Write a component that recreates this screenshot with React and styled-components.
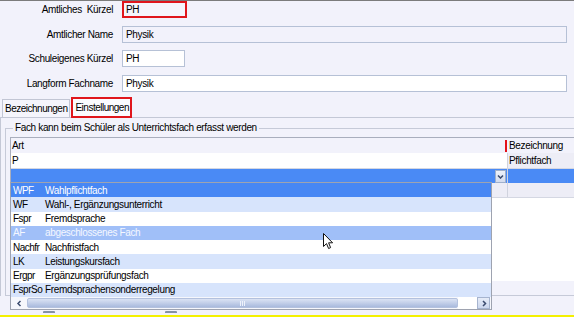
import React from "react";
import styled, { createGlobalStyle, css } from "styled-components";

const Global = createGlobalStyle`
  html, body { margin: 0; padding: 0; background: #f2f2fb; }
  body { font-family: "Liberation Sans", Arial, sans-serif; }
  * { box-sizing: border-box; }
`;

const Root = styled.div`
  position: relative;
  width: 574px;
  height: 317px;
  overflow: hidden;
  background: #f2f2fb;
  border-top: 1px solid #7c7c7c;
  border-bottom: 2px solid #f4f000;
  font-size: 10px;
  letter-spacing: -0.35px;
  color: #000;
  display: flex;
  flex-direction: column;
`;

const Form = styled.div`
  display: grid;
  grid-template-columns: 113px 1fr;
  grid-auto-rows: 17px;
  column-gap: 9px;
  row-gap: 7.7px;
  padding-right: 7px;
  align-items: center;
`;

const Label = styled.div`
  text-align: right;
  white-space: pre;
`;

const Field = styled.div`
  height: 17px;
  width: ${(p) => (p.$wide ? "100%" : "63px")};
  border: 1px solid #b6c1d6;
  background: ${(p) => (p.$readonly ? "#f2f2fb" : "#ffffff")};
  padding: 0 3px;
  display: flex;
  align-items: center;
  ${(p) =>
    p.$marked &&
    css`
      border: 2px solid #e0161c;
      width: 65px;
      padding-left: 2px;
      background: #f5f5fc;
    `}
`;

const TabStrip = styled.div`
  display: flex;
  align-items: flex-end;
  height: 19px;
  margin-top: 6px;
  padding-left: 2px;
  gap: 1px;
`;

const Tab = styled.div`
  height: 18px;
  padding: 0 2px 0 2px;
  display: flex;
  align-items: center;
  letter-spacing: -0.5px;
  border: 1px solid #c2c6d4;
  border-bottom: none;
  background: #f5f5fc;
  ${(p) =>
    p.$marked &&
    css`
      height: 21px;
      margin-bottom: -1px;
      border: 2px solid #e0161c;
      background: #fbfbff;
      padding: 0 1px 0 2px;
      position: relative;
      z-index: 1;
    `}
`;

const TabPanel = styled.div`
  width: 660px;
  border-top: 1px solid #c4c8d6;
  border-left: 1px solid #c4c8d6;
`;

const GroupBox = styled.fieldset`
  margin: 4px 0 0 4px;
  padding: 3px 0 14px 4px;
  border: 1px solid #c6cad8;
  width: 640px;
  min-width: 0;
`;

const Legend = styled.legend`
  margin-left: 3px;
  padding: 0 2px;
  height: 12px;
  line-height: 12px;
`;

const Table = styled.div`
  position: relative;
  width: 630px;
  height: 144px;
  border-top: 1px solid #a9aebd;
  border-left: 1px solid #a9aebd;
  background: #fff;
`;

const TRow = styled.div`
  display: grid;
  grid-template-columns: 497px 1fr;
  height: ${(p) => p.$h}px;
  background: ${(p) => p.$bg || "transparent"};
  ${(p) => p.$line && css`border-bottom: 1px solid #d4d7e2;`}
`;

const Cell = styled.div`
  display: flex;
  align-items: center;
  justify-content: ${(p) => (p.$end ? "space-between" : "flex-start")};
  padding-left: 1px;
  background: ${(p) => p.$bg || "transparent"};
  ${(p) => p.$sep && css`border-right: 1px solid #d0d3de;`}
`;

const RedMark = styled.span`
  width: 2px;
  height: 12px;
  background: #e4121a;
  margin-right: 1px;
`;

const DropButton = styled.div`
  width: 11px;
  height: 13px;
  margin: 0 1px 0 auto;
  border: 1px solid #9fb0cc;
  background: linear-gradient(#eef2fa, #d4dcee);
  display: flex;
  align-items: center;
  justify-content: center;
`;

const Popup = styled.div`
  position: absolute;
  top: 44px;
  left: -1px;
  width: 482px;
  border: 1px solid #9ea3b0;
  background: #fff;
  z-index: 2;
`;

const List = styled.div`
  display: grid;
  grid-auto-rows: 14.25px;
`;

const variants = {
  selected: { bg: "#4787f4", fg: "#ffffff" },
  alt: { bg: "#d7e4fc", fg: "#000" },
  plain: { bg: "#ffffff", fg: "#000" },
  hover: { bg: "#a0bff8", fg: "#f4f7ff" },
};

const Item = styled.div`
  display: flex;
  align-items: center;
  padding-left: 2px;
  background: ${(p) => variants[p.$v].bg};
  color: ${(p) => variants[p.$v].fg};
`;

const Code = styled.span`
  width: 32px;
  flex: none;
  letter-spacing: -0.5px;
`;

const Scrollbar = styled.div`
  height: 12px;
  display: flex;
  background: #f6f7fc;
  padding-right: 1px;
`;

const ArrowBtn = styled.div`
  width: ${(p) => p.$w}px;
  flex: none;
  display: flex;
  align-items: center;
  justify-content: center;
  ${(p) =>
    p.$boxed &&
    css`
      border: 1px solid #a6b4cf;
      background: linear-gradient(#e6ecf8, #ccd7ee);
    `}
`;

const Thumb = styled.div`
  width: 431px;
  flex: none;
  margin: 1px 0;
  border-radius: 2px;
  background: linear-gradient(#dbe3f4, #a9badd);
  border: 1px solid #b3c1de;
  display: flex;
  align-items: center;
  justify-content: center;
  gap: 1px;
`;

const Grip = styled.span`
  width: 1px;
  height: 5px;
  background: #eef2fb;
`;

const Track = styled.div`
  flex: 1;
  background: #fff;
`;

const Bottom = styled.div`
  flex: 1;
  display: flex;
  align-items: flex-end;
  padding-bottom: 2px;
`;

const Nub = styled.span`
  width: 12px;
  height: 2px;
  margin-left: ${(p) => p.$ml}px;
  background: #8591a3;
  border-radius: 1px 1px 0 0;
`;

const Cursor = styled.svg`
  position: absolute;
  left: 323px;
  top: 232px;
  z-index: 5;
`;

const Chevron = ({ dir }) => {
  const d =
    dir === "down"
      ? "M1 1.5 L3.5 4 L6 1.5"
      : dir === "left"
      ? "M4.5 1 L2 3.5 L4.5 6"
      : "M2 1 L4.5 3.5 L2 6";
  const w = dir === "down" ? 7 : 6;
  const h = dir === "down" ? 5 : 7;
  return (
    <svg width={w} height={h} viewBox={`0 0 ${w} ${h}`}>
      <path d={d} fill="none" stroke="#3b4b6e" strokeWidth="1.5" />
    </svg>
  );
};

const items = [
  ["WPF", "Wahlpflichtfach", "selected"],
  ["WF", "Wahl-, Ergänzungsunterricht", "alt"],
  ["Fspr", "Fremdsprache", "plain"],
  ["AF", "abgeschlossenes Fach", "hover"],
  ["Nachfr", "Nachfristfach", "plain"],
  ["LK", "Leistungskursfach", "alt"],
  ["Ergpr", "Ergänzungsprüfungsfach", "plain"],
  ["FsprSo", "Fremdsprachensonderregelung", "alt"],
];

export default function App() {
  return (
    <>
      <Global />
      <Root>
        <Form>
          <Label>{"Amtliches  Kürzel"}</Label>
          <Field $marked>PH</Field>
          <Label>Amtlicher Name</Label>
          <Field $wide $readonly>Physik</Field>
          <Label>Schuleigenes Kürzel</Label>
          <Field>PH</Field>
          <Label>Langform Fachname</Label>
          <Field $wide>Physik</Field>
        </Form>

        <TabStrip>
          <Tab>Bezeichnungen</Tab>
          <Tab $marked>Einstellungen</Tab>
        </TabStrip>

        <TabPanel>
          <GroupBox>
            <Legend>Fach kann beim Schüler als Unterrichtsfach erfasst werden</Legend>
            <Table>
              <TRow $h={15} $bg="#f2f2fb">
                <Cell $end>
                  Art
                  <RedMark />
                </Cell>
                <Cell>Bezeichnung</Cell>
              </TRow>
              <TRow $h={16} $line>
                <Cell $sep $bg="#fff">P</Cell>
                <Cell $bg="#ededf6">Pflichtfach</Cell>
              </TRow>
              <TRow $h={14} $bg="#4a8af5">
                <Cell $sep>
                  <DropButton>
                    <Chevron dir="down" />
                  </DropButton>
                </Cell>
                <Cell />
              </TRow>
              <TRow $h={15} $line>
                <Cell $sep $bg="#ededf6" />
                <Cell $bg="#ededf6" />
              </TRow>

              <Popup>
                <List>
                  {items.map(([c, n, v]) => (
                    <Item key={c} $v={v}>
                      <Code>{c}</Code>
                      {n}
                    </Item>
                  ))}
                </List>
                <Scrollbar>
                  <ArrowBtn $w={16}>
                    <Chevron dir="left" />
                  </ArrowBtn>
                  <Thumb>
                    <Grip />
                    <Grip />
                    <Grip />
                  </Thumb>
                  <Track />
                  <ArrowBtn $w={13} $boxed>
                    <Chevron dir="right" />
                  </ArrowBtn>
                </Scrollbar>
              </Popup>
            </Table>
          </GroupBox>
        </TabPanel>

        <Bottom>
          <Nub $ml={43} />
          <Nub $ml={110} />
        </Bottom>

        <Cursor width="12" height="18" viewBox="0 0 12 18">
          <path
            d="M0.5 0.5 V13.5 L3.5 10.6 L5.6 15.5 L7.6 14.6 L5.6 9.8 H9.6 Z"
            fill="#fff"
            stroke="#111"
            strokeWidth="1"
            strokeLinejoin="round"
          />
        </Cursor>
      </Root>
    </>
  );
}
